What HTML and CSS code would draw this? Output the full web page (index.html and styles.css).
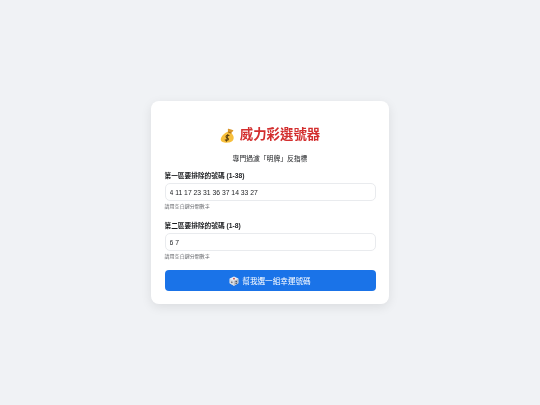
FILE: index.html
```html
<!DOCTYPE html>
<html lang="zh-Hant">
<head>
  <meta charset="UTF-8" />
  <meta name="viewport" content="width=device-width, initial-scale=1.0"/>
  <title>威力彩選號器</title>
  <link rel="stylesheet" href="styles.css">
</head>
<body>
  <div class="card">
    <h1 class="title">
      <svg class="bag-icon" viewBox="0 0 16 16" aria-hidden="true">
        <path d="M9.2 .8 L13.6 2 C14.6 2.4 14.2 3.4 13.4 3.6 L11.8 5.6 L8.6 4.4 L8.4 2 C8.3 1.2 8.6 .7 9.2 .8 Z" fill="#d9962a"/>
        <path d="M8.4 4 C4.6 5.4 .8 9 .8 12.2 C.8 14.8 3.6 15.6 7.2 15.6 C11.4 15.6 14.4 14 14.6 10.6 C14.7 8.4 13.4 6.6 12 5.2 Z" fill="#f7bf3c"/>
        <path d="M8.4 4.2 L12 5.5" stroke="#a06a18" stroke-width="1" fill="none"/>
        <path d="M10 8.4 C9.2 7.4 6.8 7.4 6.4 9 C6 10.8 9.4 10.4 9 12 C8.6 13.6 6.2 13.4 5.2 12.4 M8.4 6.4 L6.8 14.6" stroke="#5d4210" stroke-width="1.1" fill="none"/>
      </svg>
      威力彩選號器
    </h1>
    <p class="subtitle">專門過濾「明牌」反指標</p>

    <div class="field">
      <label class="field-label" for="zone1">第一區要排除的號碼 (1-38)</label>
      <input class="field-input" id="zone1" type="text" value="4 11 17 23 31 36 37 14 33 27">
      <div class="field-hint">請用空白鍵分開數字</div>
    </div>

    <div class="field">
      <label class="field-label" for="zone2">第二區要排除的號碼 (1-8)</label>
      <input class="field-input" id="zone2" type="text" value="6 7">
      <div class="field-hint">請用空白鍵分開數字</div>
    </div>

    <button class="pick-btn">
      <svg class="dice-icon" viewBox="0 0 12 12" aria-hidden="true">
        <path d="M6 .6 L11.2 3 L11.2 8.8 L6 11.6 L.8 8.8 L.8 3 Z" fill="#eef0f3"/>
        <path d="M.8 3.2 L6 5.8 L6 11.6 L.8 8.8 Z" fill="#d5d9e0"/>
        <path d="M11.2 3.2 L6 5.8 L6 11.6 L11.2 8.8 Z" fill="#b9bfc9"/>
        <circle cx="6" cy="3.2" r="1" fill="#c2303a"/>
        <circle cx="3.4" cy="7.4" r=".8" fill="#33363d"/>
        <circle cx="8.6" cy="6.6" r=".8" fill="#33363d"/>
        <circle cx="8.6" cy="8.8" r=".8" fill="#33363d"/>
      </svg>
      幫我選一組幸運號碼
    </button>
  </div>
</body>
</html>
```

FILE: styles.css
```css
body {
  margin: 0;
  height: 405px;
  display: flex;
  align-items: center;
  justify-content: center;
  background: #f0f2f5;
  font-family: "Liberation Sans", "Noto Sans CJK TC", sans-serif;
  color: #1c1e21;
}

.card {
  width: 238px;
  box-sizing: border-box;
  padding: 14px 13.5px 13px;
  background: #fff;
  border-radius: 8px;
  box-shadow: 0 3px 11px rgba(0, 0, 0, 0.09);
  will-change: transform;
}

.title {
  margin: 10px 0 0;
  display: flex;
  align-items: center;
  justify-content: center;
  gap: 5px;
  font-size: 13.4px;
  line-height: 20px;
  font-weight: 700;
  color: #d32f2f;
}

.bag-icon {
  width: 15px;
  height: 15px;
}

.subtitle {
  margin: 9px 0 0;
  text-align: center;
  font-size: 6.8px;
  line-height: 10px;
  color: #1c1e21;
}

.field {
  margin-top: 7px;
}

.field + .field {
  margin-top: 11px;
}

.field-label {
  display: block;
  font-size: 6.7px;
  line-height: 10px;
  font-weight: 700;
  color: #1c1e21;
}

.field-input {
  display: block;
  width: 100%;
  box-sizing: border-box;
  height: 18px;
  margin-top: 2px;
  padding: 0 4px;
  border: 1px solid #e9ebee;
  border-radius: 5px;
  background: #fff;
  font-family: inherit;
  font-size: 6.8px;
  color: #1c1e21;
}

.field-hint {
  margin-top: 2px;
  font-size: 5.05px;
  line-height: 7px;
  color: #65676b;
}

.pick-btn {
  display: flex;
  align-items: center;
  justify-content: center;
  gap: 3px;
  width: 100%;
  height: 21px;
  margin-top: 10px;
  padding: 0;
  border: none;
  border-radius: 4px;
  background: #1a73e8;
  color: #fff;
  font-family: inherit;
  font-size: 7.6px;
}

.dice-icon {
  width: 10px;
  height: 10px;
}
```
